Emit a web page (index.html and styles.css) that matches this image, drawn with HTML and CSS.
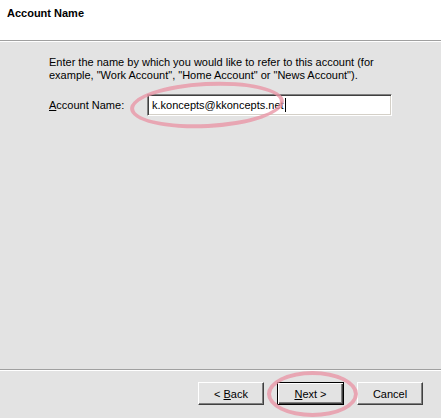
FILE: index.html
```html
<!DOCTYPE html>
<html>
<head>
<meta charset="utf-8">
<link rel="stylesheet" href="styles.css">
</head>
<body>
<div class="wizard">
  <div class="header">
    <div class="title">Account Name</div>
  </div>
  <div class="main">
    <p class="intro">Enter the name by which you would like to refer to this account (for example, "Work Account", "Home Account" or "News Account").</p>
    <div class="field">
      <label class="label"><u>A</u>ccount Name:</label>
      <div class="input"><span>k.koncepts@kkoncepts.net</span><span class="caret"></span></div>
    </div>
  </div>
  <div class="footer">
    <button class="btn">&lt; <u>B</u>ack</button>
    <button class="btn default"><u>N</u>ext &gt;</button>
    <button class="btn cancel">Cancel</button>
  </div>
  <div class="mark mark-input"></div>
  <div class="mark mark-next"></div>
</div>
</body>
</html>
```

FILE: styles.css
```css
html, body {
  margin: 0;
  padding: 0;
}
body {
  font-family: "Liberation Sans", Arial, sans-serif;
  font-size: 11px;
  color: #000;
  background: #e3e3e3;
}
.wizard {
  position: relative;
  width: 441px;
  height: 418px;
  display: flex;
  flex-direction: column;
  overflow: hidden;
}
.header {
  background: #fff;
  border-bottom: 1px solid #a0a0a0;
  box-shadow: 0 1px 0 #fff;
  box-sizing: border-box;
  height: 41px;
}
.title {
  font-weight: bold;
  padding: 7px 0 0 7px;
  line-height: 13px;
}
.main {
  flex: 1;
  padding: 14px 0 0 49px;
  margin-top: 1px;
}
.intro {
  margin: 0;
  width: 340px;
  line-height: 13px;
}
.field {
  display: flex;
  align-items: center;
  margin-top: 12px;
}
.label {
  width: 98px;
}
.label u, .btn u {
  text-decoration: underline;
}
.input {
  width: 245px;
  height: 22px;
  box-sizing: border-box;
  background: #fff;
  border-top: 1px solid #808080;
  border-left: 1px solid #808080;
  border-right: 1px solid #fff;
  border-bottom: 1px solid #fff;
  box-shadow: inset 1px 1px 0 #404040, inset -1px -1px 0 #d4d0c8;
  padding: 3px 0 0 4px;
  line-height: 14px;
  font-size: 11px;
  display: flex;
  align-items: flex-start;
}
.caret {
  display: inline-block;
  width: 1px;
  height: 14px;
  background: #000;
  margin-left: 1px;
}
.footer {
  border-top: 1px solid #a0a0a0;
  box-shadow: inset 0 1px 0 #fff;
  display: flex;
  align-items: flex-start;
  padding: 12px 0 0 198px;
  box-sizing: border-box;
  height: 49px;
}
.btn {
  font-family: "Liberation Sans", Arial, sans-serif;
  font-size: 11px;
  width: 66px;
  height: 23px;
  background: #e3e3e3;
  border-top: 1px solid #fff;
  border-left: 1px solid #fff;
  border-right: 1px solid #404040;
  border-bottom: 1px solid #404040;
  box-shadow: inset -1px -1px 0 #808080;
  padding: 0;
  margin: 0 13px 0 0;
  color: #000;
}
.btn.default {
  border: 1px solid #000;
  box-shadow: inset 1px 1px 0 #fff, inset -1px -1px 0 #404040, inset -2px -2px 0 #808080;
  width: 67px;
  margin-right: 13px;
}
.mark {
  position: absolute;
  border: 4px solid rgba(232, 150, 166, 0.8);
  border-radius: 50%;
  box-sizing: border-box;
  pointer-events: none;
}
.mark-input {
  left: 130px;
  top: 82px;
  width: 154px;
  height: 46px;
  transform: rotate(-3deg);
}
.mark-next {
  left: 267px;
  top: 371px;
  width: 91px;
  height: 46px;
}
```
